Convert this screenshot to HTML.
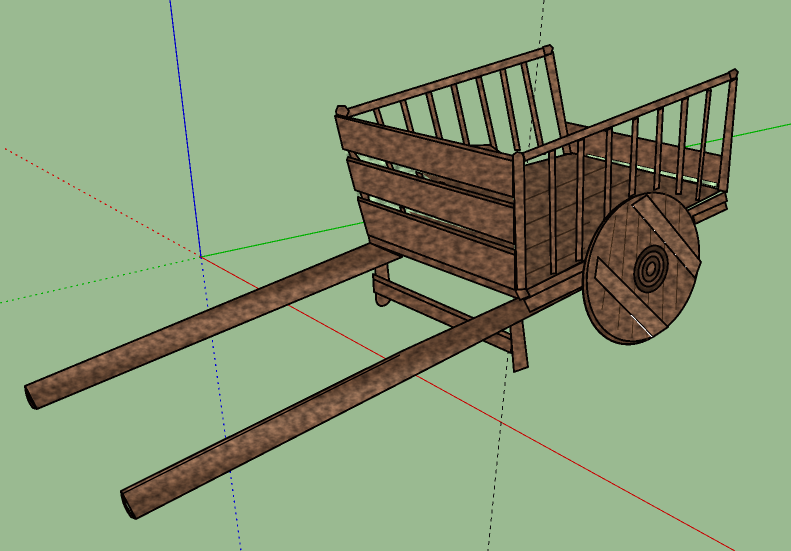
<!DOCTYPE html>
<html><head><meta charset="utf-8"><style>
html,body{margin:0;padding:0;background:#9aba91;overflow:hidden}
svg{display:block}
.w{stroke:#060302;stroke-width:1.9;stroke-linejoin:round}
</style></head><body>
<svg width="791" height="551" viewBox="0 0 791 551" shape-rendering="crispEdges" xmlns="http://www.w3.org/2000/svg">
<defs>
<filter id="t" x="0" y="0" width="791" height="551" filterUnits="userSpaceOnUse" primitiveUnits="userSpaceOnUse" color-interpolation-filters="sRGB">
<feTurbulence type="fractalNoise" baseFrequency=".13 .2" numOctaves="3" seed="4" result="n"/>
<feColorMatrix in="n" values=".55 0 0 0 .225  .55 0 0 0 .225  .55 0 0 0 .225  0 0 0 0 1" result="g"/>
<feComposite in="g" in2="SourceGraphic" operator="arithmetic" k1="2" k2="0" k3="0" k4="0"/>
</filter>
<linearGradient id="p1" gradientUnits="userSpaceOnUse" x1="200" y1="313" x2="208" y2="338"><stop offset="0" stop-color="#5a3f2d"/><stop offset=".35" stop-color="#7f5d47"/><stop offset=".7" stop-color="#7d5b45"/><stop offset="1" stop-color="#5c412f"/></linearGradient>
<linearGradient id="p2" gradientUnits="userSpaceOnUse" x1="300" y1="402" x2="312" y2="434"><stop offset="0" stop-color="#5a3f2d"/><stop offset=".35" stop-color="#80604a"/><stop offset=".7" stop-color="#7d5b45"/><stop offset="1" stop-color="#5c412f"/></linearGradient>
</defs>
<rect width="791" height="551" fill="#9aba91"/>
<g fill="none">
<line x1="201" y1="257" x2="0" y2="303" stroke="#00b000" stroke-width="1.2" stroke-dasharray="2 4"/>
<line x1="201" y1="257" x2="2" y2="147" stroke="#d00000" stroke-width="1.2" stroke-dasharray="2 4"/>
<line x1="201" y1="257" x2="241" y2="551" stroke="#0000d8" stroke-width="1.2" stroke-dasharray="2 4"/>
<line x1="170" y1="0" x2="201" y2="257" stroke="#0000c8" stroke-width="1.2"/>
<line x1="201" y1="257" x2="375" y2="220" stroke="#00b000" stroke-width="1.2"/>
<line x1="201" y1="257" x2="735" y2="551" stroke="#c80000" stroke-width="1"/>
<line x1="680" y1="148" x2="791" y2="124" stroke="#00b000" stroke-width="1.2"/>
<line x1="544" y1="0" x2="488" y2="551" stroke="#111" stroke-width="1" stroke-dasharray="4 4"/>
</g>
<g filter="url(#t)" class="w" fill="#6d4d39">
<polygon points="564,122 722,156 719,186 570,153" fill="#6d4d39"/>
<polygon points="587,154 717,183 717,187 587,158" fill="#a8cc9c" stroke="#060302" stroke-width=".8"/>
<polygon points="523,166 572,153 722,190 523,292" fill="#5c4331"/>
<g stroke="#2f2014" stroke-width="1.5">
<line x1="525" y1="200" x2="610" y2="165"/>
<line x1="525" y1="225" x2="640" y2="175"/>
<line x1="525" y1="250" x2="590" y2="222"/>
<line x1="525" y1="275" x2="585" y2="248"/>
</g>
<g fill="#75543f">
<polygon points="373,108 378,107 384,126 379,126"/>
<polygon points="400,100 405,99 414,134 409,134"/>
<polygon points="426,93 431,92 443,142 438,142"/>
<polygon points="451,85 456,84 470,148 465,148"/>
<polygon points="476,78 481,77 498,154 493,154"/>
<polygon points="500,70 505,69 520,150 515,150"/>
<polygon points="521,63 526,62 545,154 540,154"/>
<polygon points="544,54 553,52 571,154 564,154" fill="#7a5942"/>
<polygon points="459,146 490,145 505,156 480,153" fill="#6a4b37"/>
</g>
<polygon points="344,110 546,47 548,55 346,118" fill="#7e5d47"/>
<polygon points="336,111 338,106 345,106 349,111 346,118 337,117" fill="#75543f"/>
<polygon points="543,47 550,45 553,48 551,54 545,55" fill="#75543f"/>
<path d="M375,262 L387,262 L391,298 Q388,306 381,306 Q376,305 376,298 Z" fill="#76553f"/>
<polygon points="25,386 370,243 402,257 37,409" fill="url(#p1)"/>
<path d="M25,386 Q29,402 37,409 L33,408 Q26,400 25,386 Z" fill="#4a3020"/>
<polygon points="373,274 512,335 511,353 374,292" fill="#6a4a36"/>
<line x1="373" y1="279" x2="512" y2="340"/>
<polygon points="510,323 522,318 528,367 514,372" fill="#704f3a"/>
<polygon points="345,150 513,197 514,208 347,160" fill="#9aba91" stroke="none"/>
<polygon points="356,190 514,244 515,255 358,200" fill="#9aba91" stroke="none"/>
<polygon points="420,172 513,197 514,208 440,186" fill="#5a412f" stroke="none"/>
<polygon points="408,211 514,244 515,255 420,222" fill="#5a412f" stroke="none"/>
<polygon points="348,150 354,152 360,160 352,160" fill="#75543f"/>
<polygon points="360,192 368,194 369,200 363,200" fill="#75543f"/>
<polygon points="386,162 391,163 394,171 389,170" fill="#75543f"/>
<polygon points="416,172 422,174 424,182 420,182" fill="#75543f"/>
<polygon points="440,182 444,183 452,194 446,192" fill="#75543f"/>
<polygon points="400,207 404,208 406,215 402,214" fill="#75543f"/>
<polygon points="368,233 520,290 522,300 370,243" fill="#674835"/>
<polygon points="335,116 513,161 513,197 343,149" fill="#6e4e3a"/>
<polygon points="338,115 514,156 513,161 335,116" fill="#654633"/>
<polygon points="347,160 514,208 514,244 355,190" fill="#6f4f3b"/>
<polygon points="358,200 515,255 515,290 368,235" fill="#6e4e3a"/>
<polygon points="348,157 514,204 514,208 347,160" fill="#5a3f2d"/>
<polygon points="358,197 515,250 515,255 358,200" fill="#5a3f2d"/>
<polygon points="121,491 400,352 590,265 590,285 400,383 136,519" fill="url(#p2)"/>
<line x1="122" y1="494" x2="400" y2="355" stroke-width="1.4"/>
<path d="M121,491 Q126,510 136,519 L131,517 Q122,505 121,491 Z" fill="#4a3020"/>
<polygon points="522,292 725,192 727,201 524,300" fill="#6f4f3a"/>
<polygon points="524,300 590,268 590,283 530,312" fill="#75543e"/>
<polygon points="693,216 725,202 727,209 695,224" fill="#725239"/>
<g fill="#75543f">
<polygon points="549,152 555,150 556,273 551,274"/>
<polygon points="578,141 584,139 582,260 576,261"/>
<polygon points="607,130 612,128 610,222 604,225"/>
<polygon points="633,120 638,118 635,194 629,197"/>
<polygon points="658,110 663,108 659,188 654,190"/>
<polygon points="682,100 688,98 681,194 676,194"/>
<polygon points="707,91 711,90 699,200 696,200"/>
</g>
<polygon points="730,82 737,78 727,192 718,190" fill="#76553f"/>
<polygon points="523,153 731,72 733,79 525,161" fill="#7d5c46"/>
<polygon points="729,72 735,69 738,72 736,78 731,79" fill="#6a4a36"/>
<polygon points="513,155 517,152 522,153 524,158 526,290 517,291" fill="#76553f"/>
<line x1="513" y1="155" x2="517" y2="291"/>
<polygon points="515,290 526,289 530,296 520,300" fill="#6d4d38"/>
<ellipse cx="639" cy="269" rx="54" ry="77" transform="rotate(17 639 269)" fill="#5a3f2d" stroke-width="2.2"/>
<ellipse cx="643" cy="267" rx="54" ry="76" transform="rotate(17 643 267)" fill="#6c4e3a"/>
<g stroke-width="1" stroke="#3b2818">
<line x1="616" y1="215" x2="602" y2="310"/>
<line x1="628" y1="203" x2="618" y2="330"/>
<line x1="640" y1="196" x2="632" y2="338"/>
<line x1="652" y1="191" x2="647" y2="340"/>
<line x1="666" y1="192" x2="662" y2="330"/>
<line x1="680" y1="203" x2="676" y2="310"/>
</g>
<polygon points="632,205 647,195 701,262 695,278" fill="#7b5b45"/>
<polygon points="598,257 668,327 653,337 595,278" fill="#7b5b45"/>
<ellipse cx="651" cy="269" rx="16" ry="24" transform="rotate(17 651 269)" fill="#38281c"/>
<ellipse cx="651" cy="269" rx="12" ry="18" transform="rotate(17 651 269)" fill="#5a4030"/>
<ellipse cx="651" cy="269" rx="8" ry="13" transform="rotate(17 651 269)" fill="#463224"/>
<ellipse cx="651" cy="269" rx="4" ry="7" transform="rotate(17 651 269)" fill="#6a4d3a"/>
</g>
<g stroke="#fff" fill="none">
<line x1="633" y1="206" x2="694" y2="276" stroke-width="1" stroke-dasharray="1 15"/>
<line x1="631" y1="315" x2="652" y2="337" stroke-width="1"/>
</g>
</svg>
</body></html>
